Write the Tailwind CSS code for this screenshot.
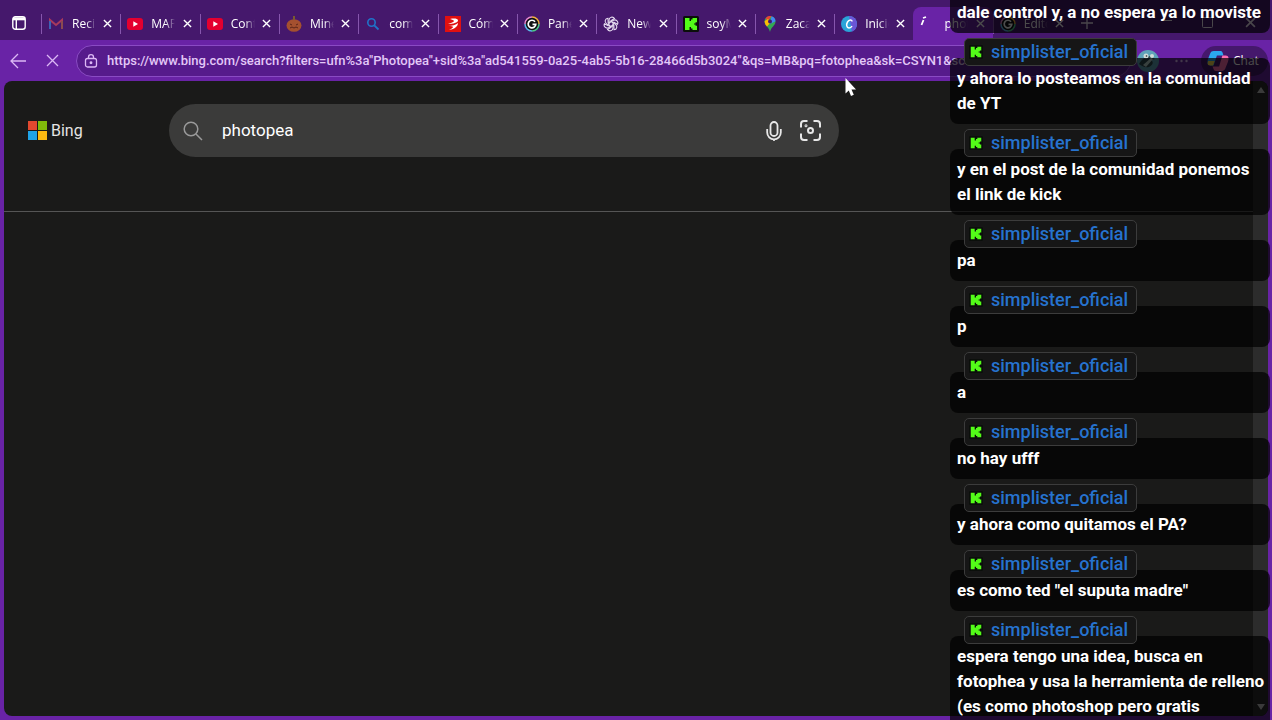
<!DOCTYPE html>
<html lang="es">
<head>
  <meta charset="UTF-8">
  <meta name="viewport" content="width=device-width, initial-scale=1.0">
  <title>photopea - Bing</title>
  <script src="https://cdn.jsdelivr.net/npm/@tailwindcss/browser@4"></script>
  <style>
    .font-ui { font-family: "Open Sans", "Noto Sans", sans-serif; }
    .font-chat { font-family: Roboto, sans-serif; }
    .tab-title {
      -webkit-mask-image: linear-gradient(to right, #000 60%, transparent);
      mask-image: linear-gradient(to right, #000 60%, transparent);
    }
  </style>
</head>
<body class="font-ui relative h-screen overflow-hidden bg-[#6923a6] flex flex-col">
  <!-- Shared icons -->
  <svg class="hidden">
    <symbol id="close" viewBox="0 0 10 10"><path d="M1 1l8 8M9 1l-8 8" fill="none" stroke="currentColor" stroke-width="1.5"/></symbol>
    <symbol id="youtube" viewBox="0 0 16 16"><rect y="2" width="16" height="12" rx="3" fill="#e4002f"/><path d="M6.3 5.2v5.6L11 8z" fill="#fff"/></symbol>
    <symbol id="kick" viewBox="0 0 16 16"><rect width="16" height="16" rx="1.500" fill="#0b0f0b"/><path d="M2 2h4.500v3H8V3.500h1.500V2H14v4.200h-1.500v1.300H11v1h1.500v1.300H14V14H9.500v-1.500H8V11H6.500v3H2z" fill="#53fc18"/></symbol>
    <symbol id="gcircle" viewBox="0 0 16 16"><circle cx="8" cy="8" r="7" fill="#101014"/><path d="M1 8a7 7 0 0 1 7-7" fill="none" stroke="#e98ad0" stroke-width="1.500"/><path d="M8 1a7 7 0 0 1 7 7" fill="none" stroke="#f2b13e" stroke-width="1.500"/><path d="M15 8a7 7 0 0 1-7 7" fill="none" stroke="#4bc88a" stroke-width="1.500"/><path d="M8 15a7 7 0 0 1-7-7" fill="none" stroke="#5ab8ea" stroke-width="1.500"/><path d="M11 5.700A3.800 3.800 0 1 0 11.800 8.300H8.500" fill="none" stroke="#fff" stroke-width="1.700"/></symbol>
  </svg>

  <!-- Tab strip -->
  <header class="h-10 shrink-0 bg-[#45186c] flex items-end text-white">
    <button aria-label="Tab actions" class="w-[41px] h-full pl-3 pt-1.5 flex items-center">
      <svg class="size-[14px]" viewBox="0 0 14 14" fill="none" stroke="#fff" stroke-width="1.400"><rect x=".8" y=".8" width="12.400" height="12.400" rx="2.500"/><path d="M1 2.800h12" stroke-width="3"/><path d="M4.300 3v10"/></svg>
    </button>
    <nav id="tabs" class="flex flex-1 h-[33px]"></nav>
    <div class="w-[200px] h-full flex items-center text-[#f3eaf9]">
      <button aria-label="New tab" class="ml-2 mt-1.5"><svg class="size-[14px]" viewBox="0 0 14 14" stroke="currentColor" stroke-width="1.300"><path d="M7 1v12M1 7h12"/></svg></button>
      <button aria-label="Minimize" class="ml-auto"><svg class="size-[11px]" viewBox="0 0 11 11" stroke="currentColor"><path d="M0 5.500h11"/></svg></button>
      <button aria-label="Maximize" class="ml-[30px] mt-1"><svg class="size-[11px]" viewBox="0 0 11 11" fill="none" stroke="currentColor"><rect x=".5" y=".5" width="10" height="10" rx="1"/></svg></button>
      <button aria-label="Close" class="ml-8 mr-4 mt-1"><svg class="size-[11px]"><use href="#close"/></svg></button>
    </div>
  </header>

  <!-- Toolbar -->
  <div class="h-[41px] shrink-0 flex items-center pl-2.5 pr-1 text-[#dcb8f5]">
    <button aria-label="Back" class="w-[34px]"><svg class="size-4" viewBox="0 0 16 16" fill="none" stroke="currentColor" stroke-width="1.300"><path d="M16 8H1M8 1L1 8l7 7"/></svg></button>
    <button aria-label="Stop" class="w-8"><svg class="ml-0.5 size-[13px]" viewBox="0 0 13 13" fill="none" stroke="currentColor" stroke-width="1.300"><path d="M1 1l11 11M12 1L1 12"/></svg></button>
    <div class="h-8 flex-1 flex items-center rounded-full border border-[#8a4bc4] bg-[#561b8c] pl-[7px] overflow-hidden">
      <svg class="size-[14px] shrink-0" viewBox="0 0 13 14" fill="none" stroke="currentColor" stroke-width="1.300"><rect x="1" y="4.500" width="11" height="8.500" rx="2"/><path d="M4 4.500V3.200a2.500 2.500 0 0 1 5 0v1.300"/><circle cx="6.500" cy="8.700" r=".8" fill="currentColor"/></svg>
      <input aria-label="Address" class="font-chat ml-[9px] flex-1 min-w-0 bg-transparent text-[13px] font-medium text-[#e3c8f7] outline-none" value='https://www.bing.com/search?filters=ufn%3a"Photopea"+sid%3a"ad541559-0a25-4ab5-5b16-28466d5b3024"&amp;qs=MB&amp;pq=fotophea&amp;sk=CSYN1&amp;sc'>
      <div class="w-[140px] shrink-0"></div>
    </div>
    <button aria-label="Profile" class="ml-1.5"><svg class="size-[22px]" viewBox="0 0 22 22"><circle cx="11" cy="11" r="11" fill="#5fa3b8"/><path d="M2 14c3-5 6-7 11-8l5 3-4 1c3 2 2 5-2 7-4 1-7-1-10-3z" fill="#2d4a50"/><path d="M6 15l8-7 2 1-7 8z" fill="#bcd8d1"/><circle cx="9" cy="6" r="2.500" fill="#cfdcd8"/><circle cx="15" cy="6" r="2" fill="#cfdcd8"/><circle cx="9.500" cy="6" r=".8" fill="#222"/></svg></button>
    <button aria-label="Settings" class="ml-4"><svg class="w-[13px] h-1" viewBox="0 0 13 4" fill="currentColor"><circle cx="1.500" cy="2" r="1.200"/><circle cx="6.500" cy="2" r="1.200"/><circle cx="11.500" cy="2" r="1.200"/></svg></button>
    <button class="ml-[13px] h-[30px] w-[67px] rounded-full bg-[#45186c] flex items-center gap-1 pl-1.5 text-xs font-medium text-white">
      <svg class="size-[22px] shrink-0" viewBox="0 0 20 20"><path d="M6 1h6c2 0 2 1 3 4H9L6 14H3c-3 0-3-3-2-6l2-5c.6-1.400 1.500-2 3-2z" fill="#2ba7f0"/><path d="M14 5h3c3 0 3 3 2 6l-2 5c-.6 2-1.600 3-3 3H8c-2 0-2-2-3-4h6z" fill="#ff6db0"/><path d="M3 14c-2 0-3-1-2-4h6l-1.500 4z" fill="#ffe04f"/></svg>
      Chat
    </button>
  </div>

  <!-- Page -->
  <main class="font-chat relative mx-1 mb-1 flex-1 min-h-0 rounded-lg bg-[#1a1a19] text-[#e4e4e4]">
    <div class="h-[131px] border-b border-[#555] flex items-start pt-[23px] pl-6">
      <a href="#" class="h-[53px] w-[141px] flex items-center gap-1 text-base">
        <svg class="size-[19px]" viewBox="0 0 19 19"><path d="M0 0h9v9H0z" fill="#e2492f"/><path d="M10 0h9v9h-9z" fill="#80bb0a"/><path d="M0 10h9v9H0z" fill="#1fa4e8"/><path d="M10 10h9v9h-9z" fill="#fbb911"/></svg>
        Bing
      </a>
      <form class="h-[53px] w-[670px] rounded-full bg-[#3b3b3a] flex items-center pl-3.5 pr-[18px]">
        <svg class="size-5" viewBox="0 0 20 20" fill="none" stroke="#9a9a9a" stroke-width="1.500"><circle cx="8" cy="8" r="6.800"/><path d="M13 13l6 6"/></svg>
        <input aria-label="Search" value="photopea" class="ml-[19px] flex-1 min-w-0 bg-transparent text-[17px] text-white outline-none">
        <button type="button" aria-label="Voice search"><svg class="w-4 h-5" viewBox="0 0 16 20" fill="none" stroke="#e8e8e8" stroke-width="1.800"><rect x="4.500" y="1" width="7" height="14" rx="3.500"/><path d="M1.200 8v3.500a6.800 6.800 0 0 0 13.600 0V8M8 18.200V20"/></svg></button>
        <button type="button" aria-label="Image search" class="ml-[18px]"><svg class="size-[21px]" viewBox="0 0 21 21" fill="none" stroke="#e8e8e8" stroke-width="2"><path d="M1 7.500V4a3 3 0 0 1 3-3h3.500M13.500 1H17a3 3 0 0 1 3 3v3.500M20 13.500V17a3 3 0 0 1-3 3h-3.500M7.500 20H4a3 3 0 0 1-3-3v-3.500"/><circle cx="10.500" cy="10.500" r="2.500"/><circle cx="6" cy="5.700" r=".5"/></svg></button>
      </form>
    </div>
    <div class="absolute inset-y-0 right-0 w-[15px] rounded-r-lg bg-[#2c2c2c] flex flex-col justify-between items-center py-1.5">
      <svg class="w-2 h-1.5" viewBox="0 0 8 6"><path d="M4 0l4 6H0z" fill="#c4c4c4"/></svg>
      <svg class="w-2 h-1.5" viewBox="0 0 8 6"><path d="M4 6L0 0h8z" fill="#c4c4c4"/></svg>
    </div>
  </main>

  <!-- Mouse pointer -->
  <svg class="absolute left-[845px] top-[78px] w-3 h-[19px]" viewBox="0 0 12 19"><path d="M.5 0v15.500l3.300-3L6 18l2.800-1.200-2.300-5.300H11z" fill="#fff"/></svg>

  <!-- Chat overlay -->
  <section id="chat" class="font-chat absolute -top-[33px] right-0.5 w-80 flex flex-col gap-[25px]"></section>

  <script>
    const tabs = [
      { title: 'Recibidos', icon: '<path d="M2 13V4l6 5 6-5v9" fill="none" stroke="#a83a5c" stroke-width="2"/><path d="M2 13V5" stroke="#3d63b5" stroke-width="2"/><path d="M14 13V5" stroke="#8a4a50" stroke-width="2"/>' },
      { title: 'MAPA', icon: '<use href="#youtube"/>' },
      { title: 'Contenido', icon: '<use href="#youtube"/>' },
      { title: 'Minecraft', icon: '<ellipse cx="8" cy="9.500" rx="7.500" ry="6.300" fill="#a4502f"/><path d="M8 4V0" stroke="#7a5a30" stroke-width="2"/><path d="M4 8l2 1M12 8l-2 1M4 12l2-1 2 1 2-1 2 1" stroke="#5a2418" fill="none"/>' },
      { title: 'como', icon: '<circle cx="6.500" cy="6.500" r="3.700" fill="none" stroke="#1f74c9" stroke-width="1.600"/><path d="M9.300 9.300L13.500 13.500" stroke="#1f74c9" stroke-width="1.800"/>' },
      { title: 'Cómo', icon: '<path d="M0 0h16v16H0z" fill="#e01010"/><path d="M5 3c4-1 8-.5 8 1.500C13 6.500 8 8 3 8c3-1 6-2 6-3S7 4 5 3zM3 10c4 0 8-1 10-3 0 3-3 6-9 7 2-1 4-2 4-3s-2-1-5-1z" fill="#fff"/>' },
      { title: 'Panel', icon: '<use href="#gcircle"/>' },
      { title: 'New chat', icon: '<g fill="none" stroke="#e6dcf0" stroke-width="1.100"><circle cx="8" cy="8" r="2.300"/><path id="p" d="M6 8V4a3 3 0 0 1 5.500-1.500L7.500 5"/><use href="#p" transform="rotate(60 8 8)"/><use href="#p" transform="rotate(120 8 8)"/><use href="#p" transform="rotate(180 8 8)"/><use href="#p" transform="rotate(240 8 8)"/><use href="#p" transform="rotate(300 8 8)"/></g>' },
      { title: 'soyMa', icon: '<use href="#kick"/>' },
      { title: 'Zacatecas', icon: '<path d="M8 0a5.500 5.500 0 0 0-5.500 5.500C2.500 9.500 7 11 8 16c1-5 5.500-6.500 5.500-10.500A5.500 5.500 0 0 0 8 0z" fill="#34a853"/><path d="M3.500 2.500A5.500 5.500 0 0 1 9.500.2L6 5z" fill="#e94235"/><path d="M9.500.2a5.500 5.500 0 0 1 4 5L8 8z" fill="#4285f4"/><path d="M2.600 5C3 9 4 9 5 10.500L9 6 6 3z" fill="#fbbc04"/><circle cx="8" cy="5.500" r="2" fill="#45186c"/>' },
      { title: 'Inicio', icon: '<circle cx="8" cy="8" r="8" fill="#2aa3d8"/><path d="M8 0a8 8 0 0 1 8 8 8 8 0 0 1-5 7.400z" fill="#6a55d8"/><path d="M11 5.500c0-2-3-2-4.500.5S5.500 12 8 12c1.500 0 2.500-1 3-2" fill="none" stroke="#fff" stroke-width="1.500"/>' },
      { title: 'photopea', active: true, icon: '<path d="M3.500 4L1.500 9M3 2l3-1" stroke="#fff" stroke-width="1.800"/>' },
      { title: 'Editor', icon: '<use href="#gcircle"/>' }
    ];

    document.getElementById('tabs').innerHTML = tabs.map(tab => `
      <div class="flex-1 min-w-0 flex items-center pl-[7px] pr-2 ${tab.active ? 'bg-[#6923a6] rounded-t-lg' : 'relative before:absolute before:left-0 before:top-[7px] before:h-5 before:w-px before:bg-[#8656ad]'}">
        <svg class="size-4 shrink-0" viewBox="0 0 16 16">${tab.icon}</svg>
        <a href="#" class="tab-title ml-2 w-6 overflow-hidden whitespace-nowrap text-xs font-medium text-white">${tab.title}</a>
        <button aria-label="Close tab" class="ml-auto"><svg class="size-[9px]"><use href="#close"/></svg></button>
      </div>
    `).join('');

    const messages = [
      ['dale control y, a no espera ya lo moviste', 1],
      ['y ahora lo posteamos en la comunidad de YT'],
      ['y en el post de la comunidad ponemos el link de kick'],
      ['pa'],
      ['p'],
      ['a'],
      ['no hay ufff'],
      ['y ahora como quitamos el PA?'],
      ['es como ted "el suputa madre"'],
      ['espera tengo una idea, busca en fotophea y usa la herramienta de relleno (es como photoshop pero gratis']
    ];

    document.getElementById('chat').innerHTML = messages.map(([text, first]) => `
      <article class="relative rounded-lg bg-black/70 pl-[7px] pr-1 py-2 ${first ? 'pt-[33px]' : ''}">
        <div class="absolute left-[14px] -top-5 h-7 flex items-center gap-2 rounded-[5px] border border-[#3c3c3c] bg-[#161616] pl-1 pr-2">
          <svg class="size-[14px]" viewBox="0 0 16 16"><use href="#kick"/></svg>
          <span class="text-lg font-medium text-[#2673cf]">simplister_oficial</span>
        </div>
        <p class="text-[17px] leading-[25px] font-bold text-white">${text}</p>
      </article>
    `).join('');
  </script>
</body>
</html>
